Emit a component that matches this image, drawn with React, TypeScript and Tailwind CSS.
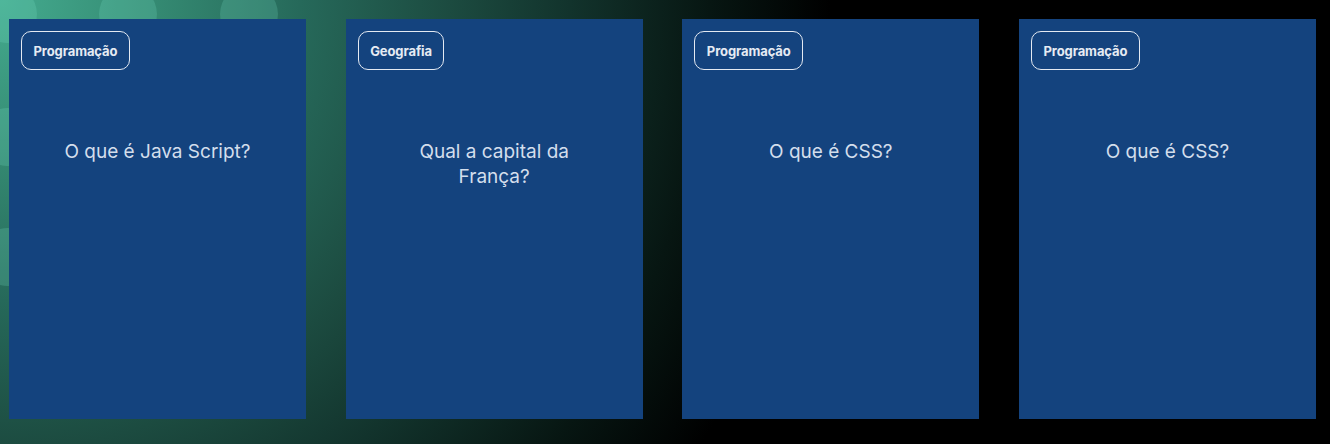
import React from "react";

const cards = [
  { tag: "Programação", q: "O que é Java Script?" },
  { tag: "Geografia", q: "Qual a capital da França?" },
  { tag: "Programação", q: "O que é CSS?" },
  { tag: "Programação", q: "O que é CSS?" },
];

const circles = [
  { x: 8, y: 14 },
  { x: 128, y: 14 },
  { x: 249, y: 14 },
  { x: 8, y: 137 },
  { x: 8, y: 257 },
  { x: 128, y: 137 },
  { x: 249, y: 137 },
  { x: 128, y: 257 },
];

export default function App() {
  return (
    <div
      className="relative w-[1330px] h-[444px] overflow-hidden bg-[radial-gradient(circle_at_0_0,#44ab8f_0px,#358b73_150px,#26695a_300px,#1c4b40_450px,#12332c_570px,#071612_710px,#000000_830px)]"
      style={{ fontFamily: "Inter, 'Noto Sans', sans-serif" }}
    >
      {circles.map((c, i) => (
        <div
          key={i}
          className="absolute w-[58px] h-[58px] rounded-full bg-[#7fe8cc]/20"
          style={{ left: c.x - 29, top: c.y - 29 }}
        />
      ))}
      <div className="relative flex gap-[39.67px] pl-[9px] pt-[19px]">
        {cards.map((c, i) => (
          <div key={i} className="w-[297px] h-[400px] bg-[#14437e] flex flex-col p-3">
            <div className="self-start h-[39px] px-[11.5px] pt-[2px] flex items-center rounded-[10px] border border-[#e3e9f2] text-[13px] font-bold text-[#e6ebf3] tracking-[-0.1px]">
              {c.tag}
            </div>
            <div className="mt-[69px] mx-auto w-[212px] text-center text-[19px] leading-[25px] text-[#d3deec]">
              {c.q}
            </div>
          </div>
        ))}
      </div>
    </div>
  );
}
